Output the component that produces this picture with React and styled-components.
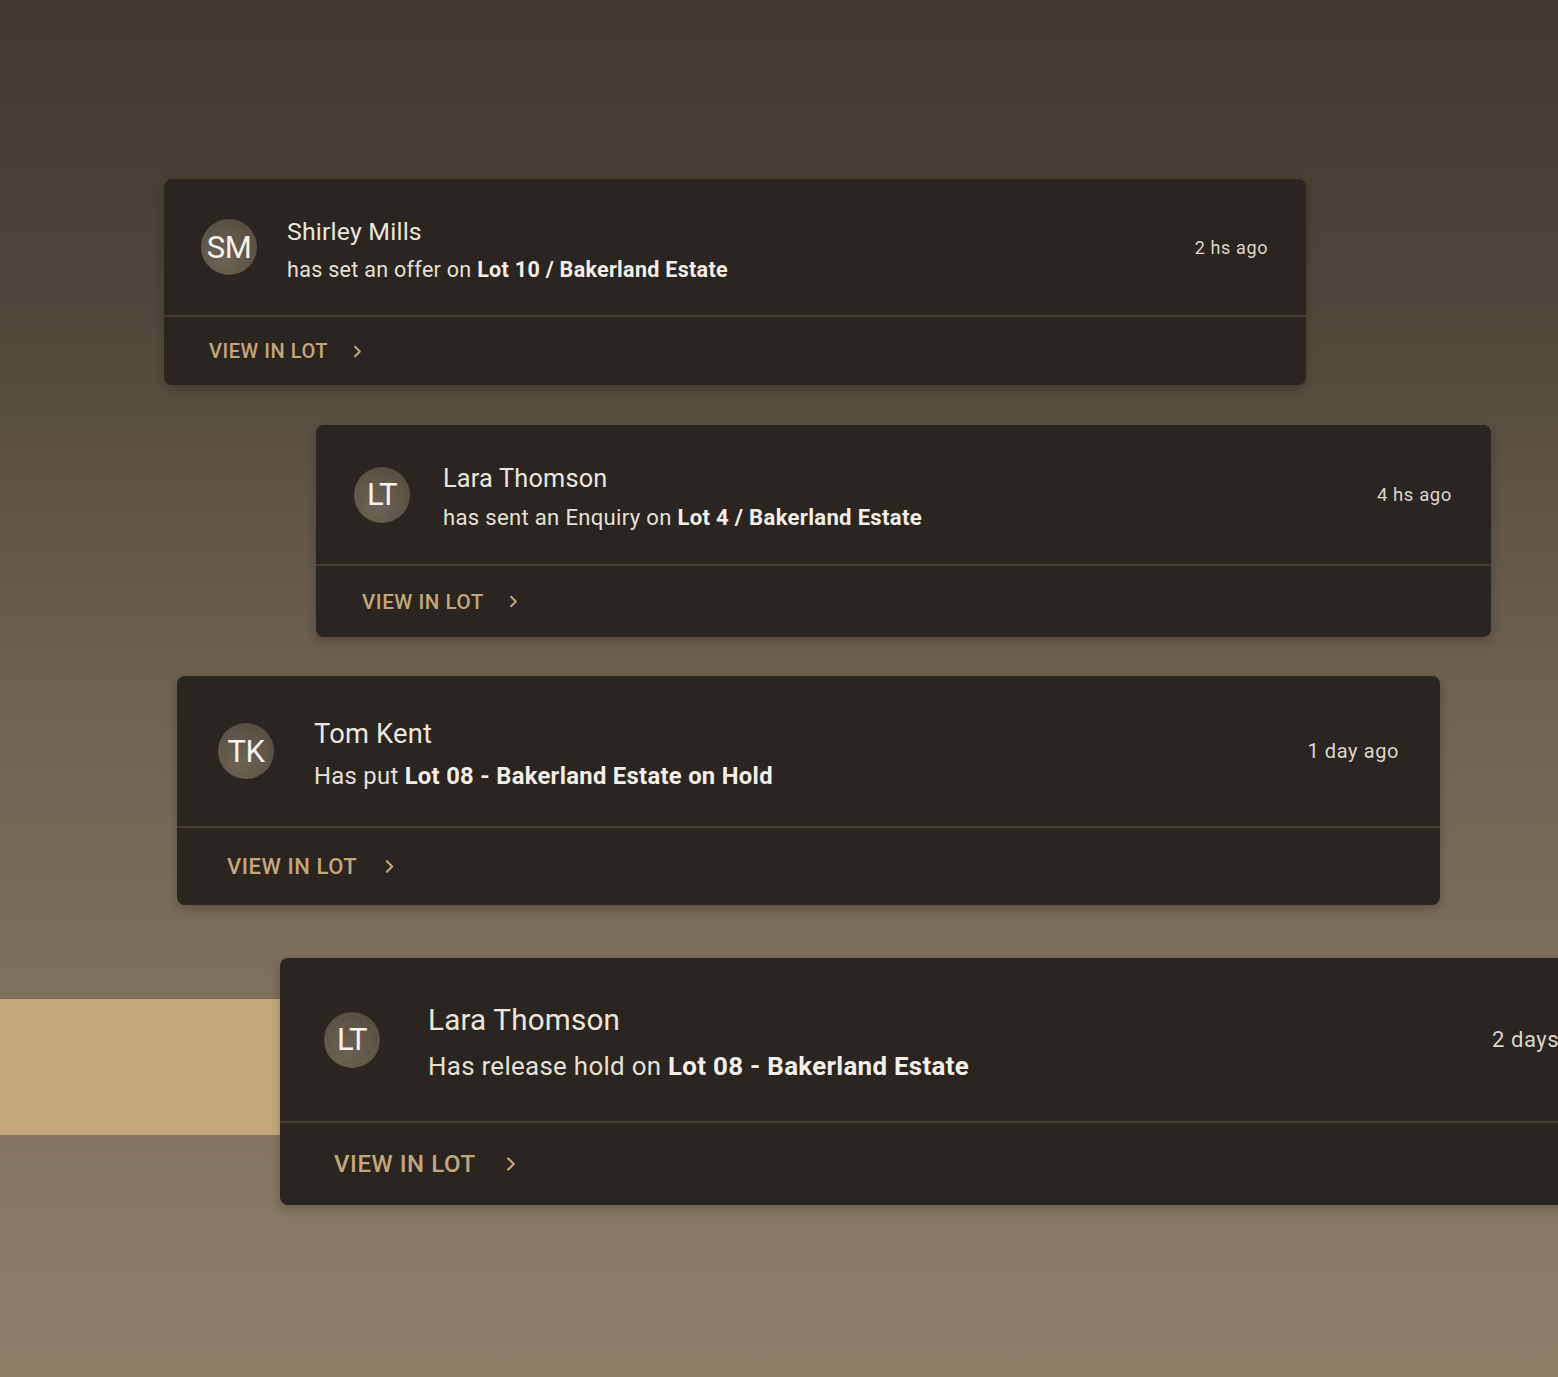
import React from 'react';
import styled, { createGlobalStyle } from 'styled-components';
import { ChevronRight } from 'lucide-react';

const GlobalStyle = createGlobalStyle`
  html, body {
    margin: 0;
    padding: 0;
    overflow: hidden;
  }
  body {
    font-family: Roboto, "Liberation Sans", sans-serif;
    background: #433a2f;
  }
`;

const Page = styled.div`
  width: 1558px;
  height: 1377px;
  overflow: hidden;
  background: linear-gradient(180deg, #433a2f 0%, #4c4336 18%, #6d6150 50%, #7f725e 75%, #8d7e68 100%);
  display: flex;
  flex-direction: column;
  padding-top: 179px;
  box-sizing: border-box;
`;

const Row = styled.div`
  display: flex;
  align-items: flex-start;
  margin-top: ${p => p.$gap}px;
  padding-left: ${p => p.$left}px;
`;

const Band = styled.div`
  flex: 0 0 ${p => p.$w}px;
  height: 136px;
  margin-top: 41px;
  background: #c4a87c;
`;

const Card = styled.div`
  flex: 0 0 ${p => p.$w}px;
  width: ${p => p.$w}px;
  background: #2a2520;
  border-radius: 8px;
  box-shadow: 0 4px 10px rgba(20, 15, 10, 0.25);
  overflow: hidden;
`;

const Top = styled.div`
  height: ${p => p.$h}px;
  display: flex;
  align-items: center;
  padding: 0 ${p => p.$padR}px 0 ${p => p.$padL}px;
  border-bottom: 2px solid #463e33;
  box-sizing: border-box;
`;

const Avatar = styled.div`
  flex: 0 0 56px;
  width: 56px;
  height: 56px;
  border-radius: 50%;
  background: radial-gradient(circle at 40% 70%, #6d6354 0%, #5d5446 60%, #4f473b 100%);
  color: #f6f2ec;
  font-size: 31px;
  display: flex;
  align-items: center;
  justify-content: center;
  letter-spacing: -0.5px;
`;

const Body = styled.div`
  flex: 1;
  margin-left: ${p => p.$gap}px;
  padding-top: 6px;
  display: flex;
  flex-direction: column;
  gap: ${p => p.$lineGap}px;
`;

const Name = styled.div`
  font-size: ${p => p.$size}px;
  color: #ece6dc;
  line-height: 1.2;
  letter-spacing: 0.2px;
`;

const Desc = styled.div`
  font-size: ${p => p.$size}px;
  color: #e6e0d6;
  line-height: 1.2;
  letter-spacing: 0.3px;

  b {
    font-weight: 700;
    color: #f3eee7;
  }
`;

const Time = styled.div`
  font-size: ${p => p.$size}px;
  color: #ddd6cb;
  letter-spacing: 0.6px;
  white-space: nowrap;
`;

const Footer = styled.div`
  height: ${p => p.$h}px;
  display: flex;
  align-items: center;
  padding-left: ${p => p.$pad}px;
  gap: ${p => p.$gap}px;
  color: #c4a67b;
  font-size: ${p => p.$size}px;
  font-weight: 500;
  letter-spacing: 0.55px;
`;

const cards = [
  {
    row: { gap: 0, left: 164 },
    w: 1142, topH: 138, footH: 68, padL: 37, padR: 38, gap: 30, lineGap: 10,
    nameSize: 24.8, descSize: 21.5, timeSize: 18, linkSize: 20, linkPad: 45, chevGap: 20, chev: 19,
    initials: 'SM', name: 'Shirley Mills',
    desc: <>has set an offer on <b>Lot 10 / Bakerland Estate</b></>,
    time: '2 hs ago',
  },
  {
    row: { gap: 40, left: 316 },
    w: 1175, topH: 141, footH: 71, padL: 38, padR: 39, gap: 33, lineGap: 10,
    nameSize: 25.3, descSize: 22.1, timeSize: 18.5, linkSize: 20.5, linkPad: 46, chevGap: 20, chev: 19,
    initials: 'LT', name: 'Lara Thomson',
    desc: <>has sent an Enquiry on <b>Lot 4 / Bakerland Estate</b></>,
    time: '4 hs ago',
  },
  {
    row: { gap: 39, left: 177 },
    w: 1263, topH: 152, footH: 77, padL: 41, padR: 41, gap: 40, lineGap: 11,
    nameSize: 27.3, descSize: 23.8, timeSize: 20, linkSize: 22, linkPad: 50, chevGap: 22, chev: 21,
    initials: 'TK', name: 'Tom Kent',
    desc: <>Has put <b>Lot 08 - Bakerland Estate on Hold</b></>,
    time: '1 day ago',
  },
  {
    row: { gap: 53, left: 0 },
    band: 280,
    w: 1368, topH: 165, footH: 82, padL: 44, padR: 44, gap: 48, lineGap: 12,
    nameSize: 29.6, descSize: 25.9, timeSize: 22, linkSize: 24, linkPad: 54, chevGap: 24, chev: 22,
    initials: 'LT', name: 'Lara Thomson',
    desc: <>Has release hold on <b>Lot 08 - Bakerland Estate</b></>,
    time: '2 days ago',
  },
];

const ActivityCard = ({ c }) => (
  <Card $w={c.w}>
    <Top $h={c.topH} $padL={c.padL} $padR={c.padR}>
      <Avatar>{c.initials}</Avatar>
      <Body $gap={c.gap} $lineGap={c.lineGap}>
        <Name $size={c.nameSize}>{c.name}</Name>
        <Desc $size={c.descSize}>{c.desc}</Desc>
      </Body>
      <Time $size={c.timeSize}>{c.time}</Time>
    </Top>
    <Footer $h={c.footH} $pad={c.linkPad} $gap={c.chevGap} $size={c.linkSize}>
      VIEW IN LOT
      <ChevronRight size={c.chev} strokeWidth={2.5} />
    </Footer>
  </Card>
);

export default function App() {
  return (
    <>
      <GlobalStyle />
      <Page>
        {cards.map((c, i) => (
          <Row key={i} $gap={c.row.gap} $left={c.row.left}>
            {c.band && <Band $w={c.band} />}
            <ActivityCard c={c} />
          </Row>
        ))}
      </Page>
    </>
  );
}
